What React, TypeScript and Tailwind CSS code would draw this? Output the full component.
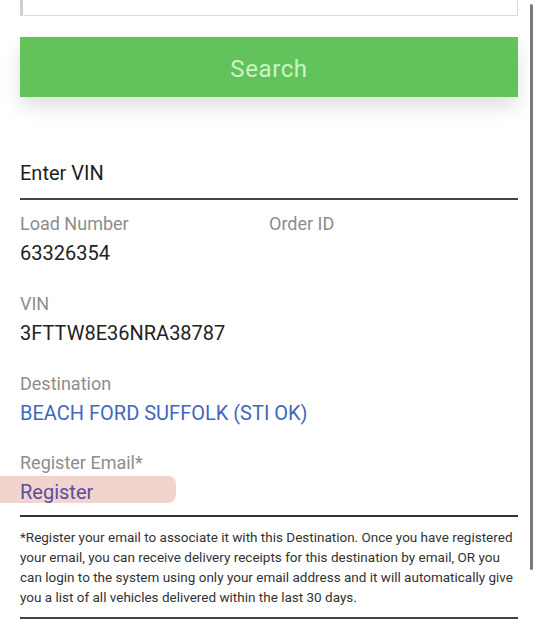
const Field = ({
  label,
  value,
  valueClass = "text-[#222]",
}: {
  label: string;
  value?: string;
  valueClass?: string;
}) => (
  <div className="flex flex-col">
    <span className="text-[18px] leading-[28px] text-[#8d8d8d]">{label}</span>
    {value ? (
      <span className={`text-[20px] leading-[30px] ${valueClass}`}>{value}</span>
    ) : null}
  </div>
);

export default function App() {
  return (
    <div
      className="relative h-[640px] w-[537px] overflow-hidden bg-white"
      style={{ fontFamily: "Roboto, 'Liberation Sans', sans-serif" }}
    >
      {/* overlay scrollbar */}
      <div className="absolute left-[530px] top-[4px] h-[566px] w-[3px] rounded-full bg-[#7a7a7a]" />

      <div className="flex flex-col px-[20px] pr-[19px]">
        <div className="-mt-[10px] h-[26px] border border-[#dcdcdc] border-l-[3px] border-l-[#cfcfcf] bg-white" />

        <button className="mt-[21px] h-[60px] w-full bg-[#62c25c] pt-[3px] text-[24px] tracking-wide text-[#cdf5c4] shadow-[0_10px_18px_rgba(0,0,0,0.12)]">
          Search
        </button>

        <div className="mt-[61px] border-b-2 border-[#444] pb-[10px] text-[20px] leading-[30px] text-[#1e1e1e]">
          Enter VIN
        </div>

        <div className="mt-[10px] grid grid-cols-2">
          <Field label="Load Number" value="63326354" />
          <Field label="Order ID" />
        </div>

        <div className="mt-[22px]">
          <Field label="VIN" value="3FTTW8E36NRA38787" />
        </div>

        <div className="mt-[22px]">
          <Field
            label="Destination"
            value="BEACH FORD SUFFOLK (STI OK)"
            valueClass="text-[#3f67c0]"
          />
        </div>

        <div className="relative mt-[21px] flex flex-col border-b-2 border-[#333] pb-[8px]">
          <div className="absolute -left-[20px] top-[27px] h-[27px] w-[176px] rounded-r-[8px] bg-[#f1cfc8] opacity-90 blur-[0.5px]" />
          <span className="relative text-[18px] leading-[28px] text-[#8d8d8d]">
            Register Email*
          </span>
          <span className="relative text-[20px] leading-[30px] text-[#55519e]">
            Register
          </span>
        </div>

        <p className="border-b-2 border-[#444] pb-[10px] pt-[10px] text-[13.5px] leading-[20px] text-[#333]">
          *Register your email to associate it with this Destination. Once you have registered
          your email, you can receive delivery receipts for this destination by email, OR you
          can login to the system using only your email address and it will automatically give
          you a list of all vehicles delivered within the last 30 days.
        </p>
      </div>
    </div>
  );
}
